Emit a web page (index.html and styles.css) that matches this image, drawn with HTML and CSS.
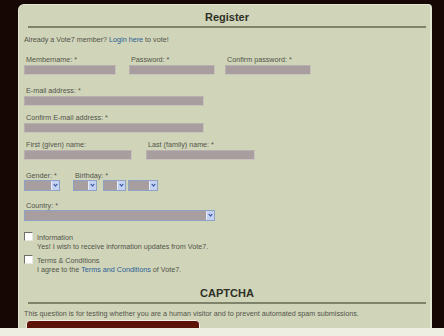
FILE: index.html
```html
<!DOCTYPE html>
<html lang="en">
<head>
    <meta charset="UTF-8">
    <meta name="viewport" content="width=device-width, initial-scale=1.0">
    <title>Register</title>
    <link rel="stylesheet" href="styles.css">
</head>
<body>
    <div class="page">
        <div class="panel">
            <h2 class="title">Register</h2>
            <p class="intro">Already a Vote7 member? <a href="#">Login here</a> to vote!</p>

            <div class="row first">
                <span class="field">
                    <label>Membername: *</label>
                    <span class="input w92"></span>
                </span>
                <span class="field col2">
                    <label>Password: *</label>
                    <span class="input w86"></span>
                </span>
                <span class="field col3">
                    <label>Confirm password: *</label>
                    <span class="input w86"></span>
                </span>
            </div>

            <div class="row gap11">
                <span class="field">
                    <label>E-mail address: *</label>
                    <span class="input w180"></span>
                </span>
            </div>

            <div class="row gap7">
                <span class="field">
                    <label>Confirm E-mail address: *</label>
                    <span class="input w180"></span>
                </span>
            </div>

            <div class="row gap7">
                <span class="field">
                    <label>First (given) name:</label>
                    <span class="input w108"></span>
                </span>
                <span class="field col-last">
                    <label>Last (family) name: *</label>
                    <span class="input w109"></span>
                </span>
            </div>

            <div class="row gap11">
                <span class="field">
                    <label class="tight">Gender: *</label>
                    <span class="select w36"><span class="arrow"></span></span>
                </span>
                <span class="field col-birth">
                    <label class="tight">Birthday: *</label>
                    <span class="selects">
                        <span class="select w24"><span class="arrow"></span></span>
                        <span class="select w23 sp6"><span class="arrow"></span></span>
                        <span class="select w30 sp2"><span class="arrow"></span></span>
                    </span>
                </span>
            </div>

            <div class="row gap10">
                <span class="field">
                    <label class="tight">Country: *</label>
                    <span class="select w191"><span class="arrow"></span></span>
                </span>
            </div>

            <div class="check first-check">
                <span class="box"></span>
                <div class="check-text">
                    <div>Information</div>
                    <div>Yes! I wish to receive information updates from Vote7.</div>
                </div>
            </div>
            <div class="check">
                <span class="box"></span>
                <div class="check-text">
                    <div>Terms &amp; Conditions</div>
                    <div>I agree to the <a href="#">Terms and Conditions</a> of Vote7.</div>
                </div>
            </div>

            <h2 class="title captcha-title">CAPTCHA</h2>
            <p class="intro captcha-text">This question is for testing whether you are a human visitor and to prevent automated spam submissions.</p>
            <div class="captcha-box"></div>
        </div>
    </div>
    <div class="footer"></div>
</body>
</html>
```

FILE: styles.css
```css
body{
    margin: 0;
    background-color: #eeeee2;
    font-family: "Liberation Sans", Arial, sans-serif;
    font-size: 7.2px;
    color: #52544a;
}

.page{
    height: 328px;
    overflow: hidden;
    background-color: #170704;
    padding: 4px 12px 0 18px;
    box-sizing: border-box;
}

.panel{
    background-color: #d0d5b9;
    border-left: 1px solid #e2e5d2;
    border-right: 2px solid #e2e5d2;
    border-top: 1px solid #e2e5d2;
    border-radius: 6px 4px 0 0;
    padding: 0 4px 0 5px;
    height: 330px;
}

.title{
    margin: 0 0 0 4px;
    padding: 6px 0 3px;
    line-height: 12px;
    font-size: 11px;
    text-align: center;
    color: #2e3028;
    border-bottom: 2px solid #7d8469;
}

.intro{
    margin: 7px 0 0;
    line-height: 9px;
}

a{
    color: #2a5f96;
    text-decoration: none;
}

.row{
    display: flex;
    align-items: flex-start;
}

.row.first{ margin-top: 11px; }
.gap7{ margin-top: 7px; }
.gap10{ margin-top: 10px; }
.gap11{ margin-top: 11px; }

.field{
    display: flex;
    flex-direction: column;
}

.field label{
    line-height: 9px;
    padding-left: 2px;
    margin-bottom: 1px;
}

.field label.tight{
    margin-bottom: 0;
}

.col2{ margin-left: 13px; }
.col3{ margin-left: 10px; }
.col-last{ margin-left: 14px; }
.col-birth{ margin-left: 13px; }

.input{
    display: block;
    height: 8px;
    background-color: #a89e9f;
    border: 1px solid #b8b0ae;
    border-right-color: #c8c4bc;
    border-bottom-color: #c8c4bc;
}

.w92{ width: 90px; }
.w86{ width: 84px; }
.w180{ width: 178px; }
.w108{ width: 106px; }
.w109{ width: 107px; }

.selects{
    display: flex;
}

.select{
    position: relative;
    display: block;
    height: 9px;
    background-color: #a89e9f;
    border: 1px solid #8ea3c4;
}

.w36{ width: 34px; }
.w24{ width: 22px; }
.w23{ width: 21px; }
.w30{ width: 28px; }
.w191{ width: 189px; }
.sp6{ margin-left: 6px; }
.sp2{ margin-left: 2px; }

.select .arrow{
    position: absolute;
    right: 0;
    top: 0;
    width: 8px;
    height: 9px;
    background-color: #c3d2f2;
    border-left: 1px solid #e6ecfa;
    box-sizing: border-box;
}

.select .arrow::after{
    content: "";
    position: absolute;
    left: 2px;
    top: 2px;
    width: 2px;
    height: 2px;
    border-right: 1.5px solid #27408f;
    border-bottom: 1.5px solid #27408f;
    transform: rotate(45deg);
}

.check{
    display: flex;
    align-items: flex-start;
    margin-top: 4px;
}

.check.first-check{ margin-top: 11px; }

.check .box{
    width: 7px;
    height: 7px;
    background-color: #fff;
    border: 1px solid #6e6e64;
    border-right-color: #e8e8e0;
    border-bottom-color: #e8e8e0;
}

.check-text{
    margin-left: 4px;
    line-height: 9px;
    padding-top: 1px;
}

.captcha-title{
    margin-top: 7px;
}

.intro.captcha-text{
    margin-top: 5px;
}

.captcha-box{
    margin: 2px 0 0 2px;
    width: 172px;
    height: 20px;
    background-color: #5b1407;
    border: 1px solid #f4f0ea;
    border-radius: 4px;
}

.footer{
    height: 8px;
    background-color: #eeeee2;
}
```
